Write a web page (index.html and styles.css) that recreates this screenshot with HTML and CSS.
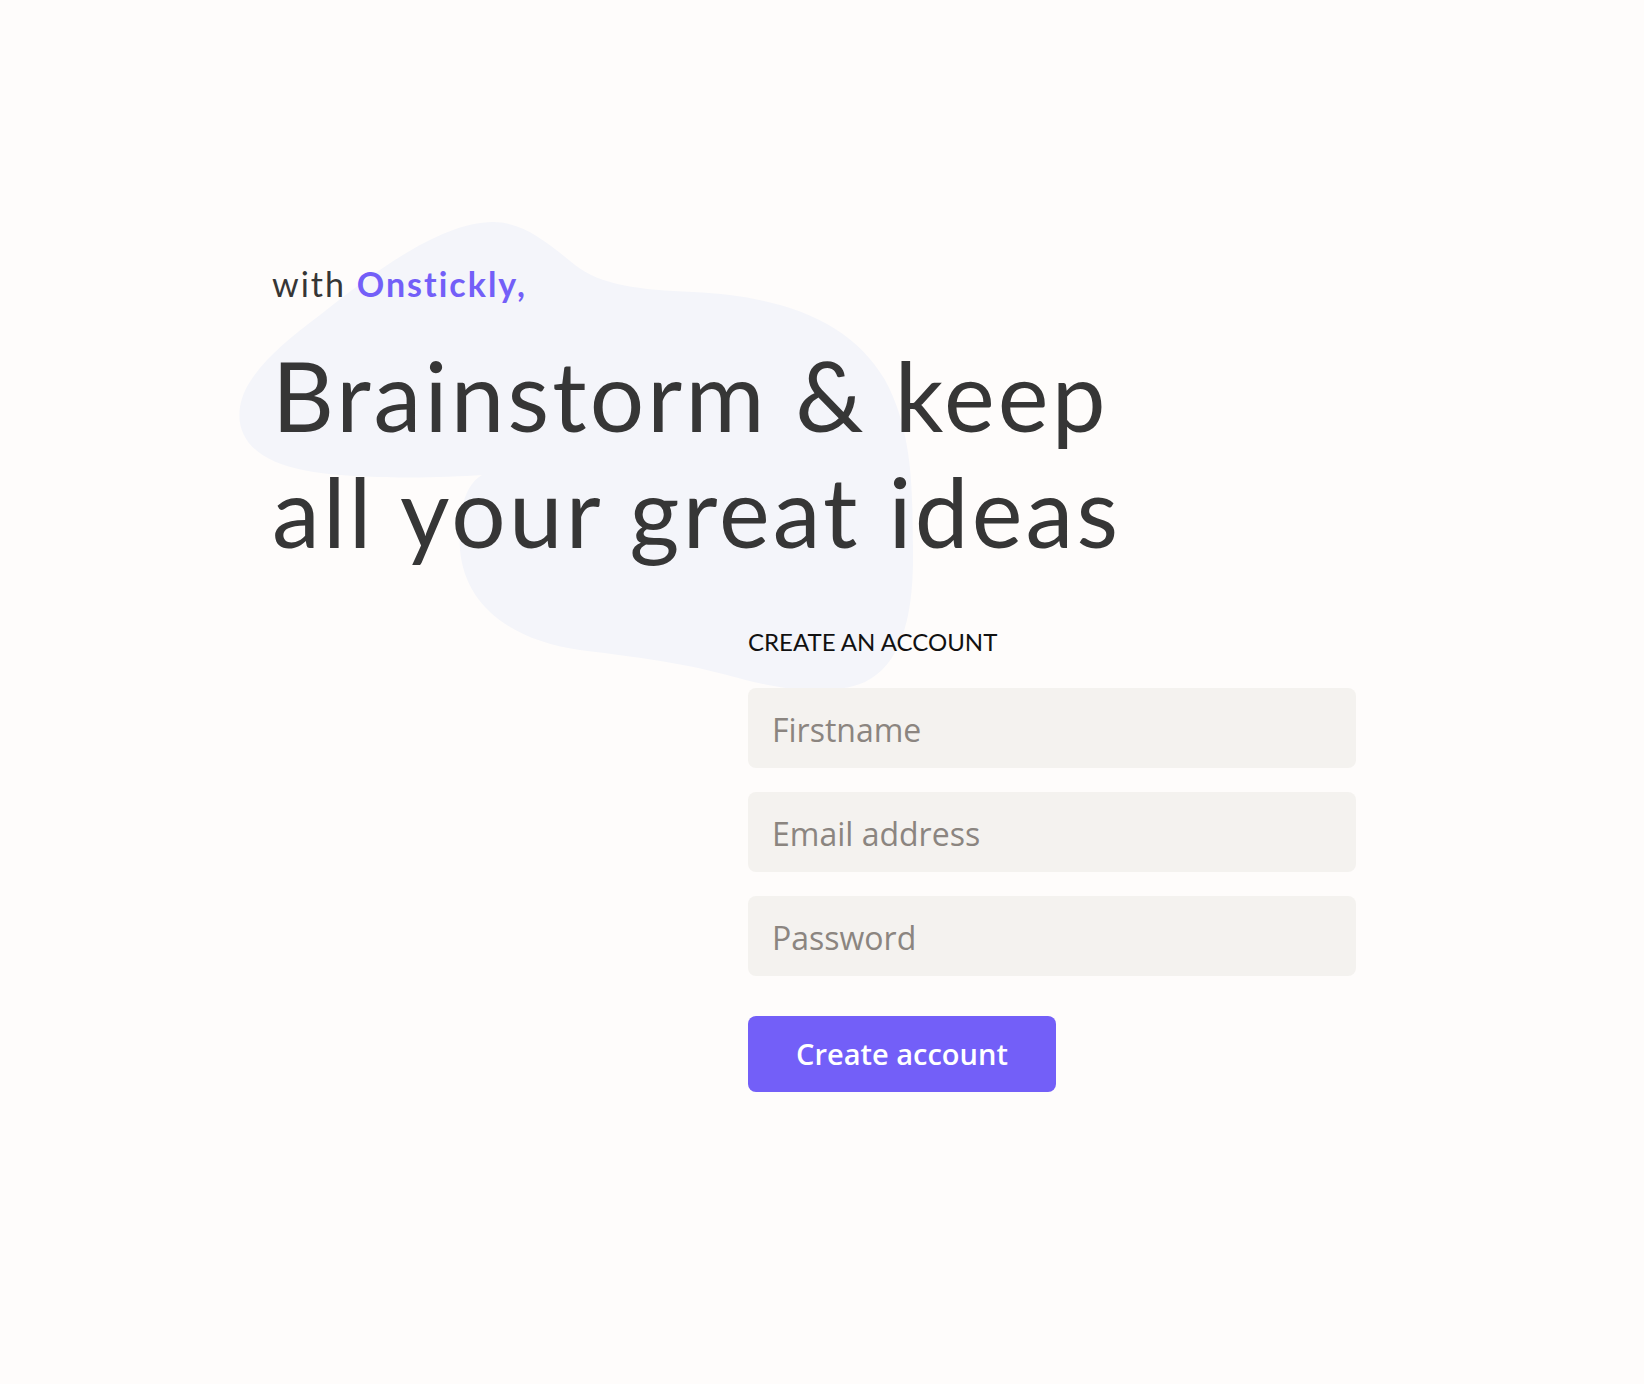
FILE: index.html
```html
<!DOCTYPE html>
<html lang="en">
<head>
<meta charset="utf-8">
<title>Onstickly – Create an account</title>
<link rel="stylesheet" href="styles.css">
</head>
<body>
<main class="page">
  <div class="container">
    <svg class="blob" width="720" height="500" viewBox="0 0 720 500" aria-hidden="true">
      <path d="M273 22 C305 22 330 45 355 65 C380 85 420 90 473 92 C560 96 630 120 665 180 C695 235 692 300 693 350 C694 420 680 465 645 482 C610 497 560 490 507 475 C460 462 400 455 360 450 C290 440 245 405 240 350 C238 310 245 285 262 275 C220 278 130 280 83 270 C40 262 15 240 20 207 C25 175 60 145 100 115 C150 75 220 22 273 22 Z" fill="#f4f5fa"/>
    </svg>
    <div class="hero">
      <p class="kicker">with <span class="brand">Onstickly,</span></p>
      <h1 class="title">Brainstorm &amp; keep<br>all your great ideas</h1>
    </div>
    <form class="signup" action="#">
      <h2 class="form-title">CREATE AN ACCOUNT</h2>
      <input class="field" type="text" placeholder="Firstname">
      <input class="field" type="email" placeholder="Email address">
      <input class="field" type="password" placeholder="Password">
      <button class="btn" type="button">Create account</button>
    </form>
  </div>
</main>
</body>
</html>
```
FILE: styles.css
```css
* { box-sizing: border-box; }
html, body { margin: 0; padding: 0; }
body {
  background: #fefcfb;
  font-family: "Lato", "Inter", sans-serif;
  color: #363636;
}
.page {
  min-height: 1384px;
  padding-top: 264px;
}
.container {
  position: relative;
  width: 1100px;
  margin: 0 auto;
}
.blob {
  position: absolute;
  left: -52px;
  top: -64px;
  z-index: 0;
}
.hero, .signup { position: relative; z-index: 1; }
.kicker {
  margin: 0;
  font-size: 34px;
  line-height: 1.2;
  letter-spacing: 2px;
  color: #363636;
}
.brand {
  color: #735ff8;
  font-weight: 700;
  letter-spacing: 2px;
}
.title {
  margin: 32px 0 0;
  font-size: 96px;
  line-height: 116px;
  font-weight: 400;
  letter-spacing: 3.2px;
  color: #363636;
}
.signup {
  margin: 59px 0 0 476px;
  width: 608px;
  display: flex;
  flex-direction: column;
  align-items: flex-start;
}
.form-title {
  margin: 0 0 31px;
  font-size: 24px;
  line-height: 1.2;
  font-weight: 400;
  color: #111;
}
.field {
  width: 100%;
  height: 80px;
  margin: 0 0 24px;
  padding: 4px 24px 0;
  border: 0;
  border-radius: 8px;
  background: #f4f2ef;
  font-family: "Open Sans", sans-serif;
  font-size: 32px;
  color: #363636;
  outline: none;
}
.field::placeholder { color: #8b8580; }
.btn {
  margin-top: 16px;
  width: 308px;
  height: 76px;
  border: 0;
  border-radius: 8px;
  background: #735ff8;
  color: #fff;
  font-family: "Open Sans", sans-serif;
  font-size: 29px;
  font-weight: 600;
  cursor: pointer;
}
```
